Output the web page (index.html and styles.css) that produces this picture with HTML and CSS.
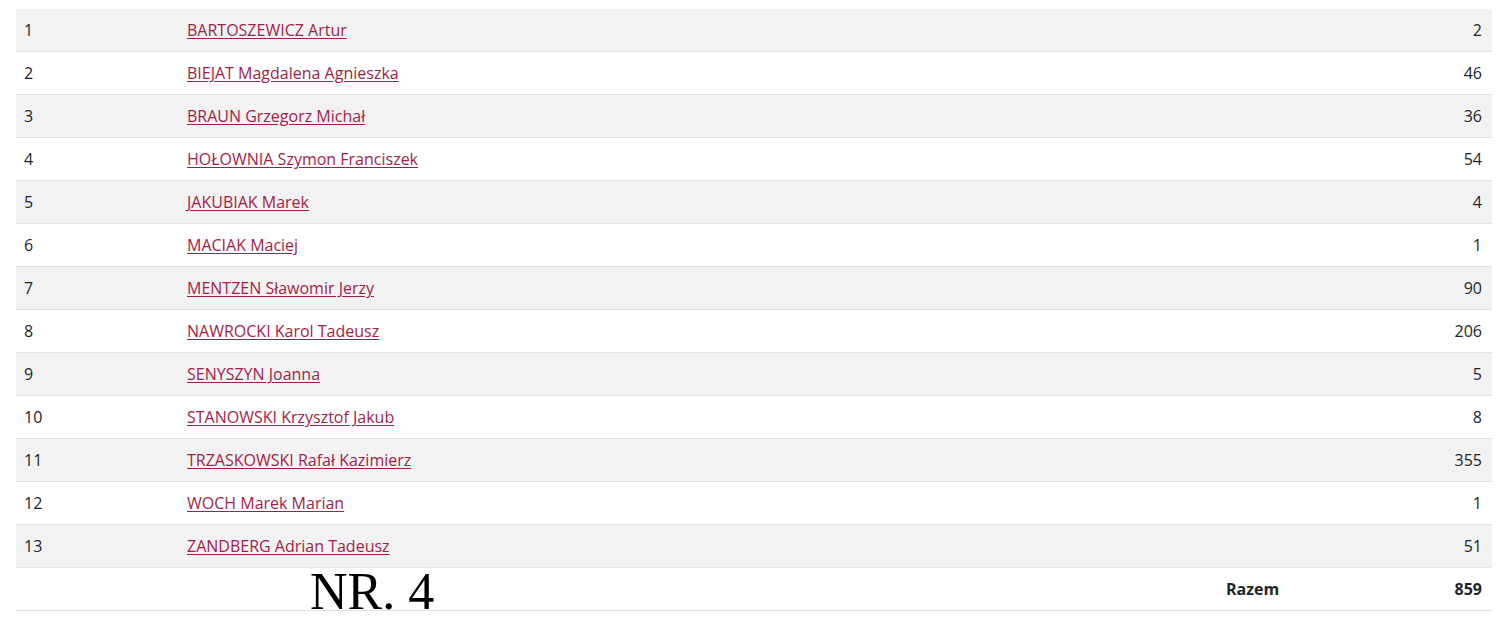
FILE: index.html
```html
<!DOCTYPE html>
<html lang="pl">
<head>
<meta charset="utf-8">
<title>Wyniki</title>
<link rel="stylesheet" href="styles.css">
</head>
<body>
<div class="wrap">
<table class="results">
<colgroup>
<col class="c-lp">
<col class="c-name">
<col class="c-label">
<col class="c-votes">
</colgroup>
<tbody>
<tr><td>1</td><td colspan="2"><a href="#">BARTOSZEWICZ Artur</a></td><td class="num">2</td></tr>
<tr><td>2</td><td colspan="2"><a href="#">BIEJAT Magdalena Agnieszka</a></td><td class="num">46</td></tr>
<tr><td>3</td><td colspan="2"><a href="#">BRAUN Grzegorz Michał</a></td><td class="num">36</td></tr>
<tr><td>4</td><td colspan="2"><a href="#">HOŁOWNIA Szymon Franciszek</a></td><td class="num">54</td></tr>
<tr><td>5</td><td colspan="2"><a href="#">JAKUBIAK Marek</a></td><td class="num">4</td></tr>
<tr><td>6</td><td colspan="2"><a href="#">MACIAK Maciej</a></td><td class="num">1</td></tr>
<tr><td>7</td><td colspan="2"><a href="#">MENTZEN Sławomir Jerzy</a></td><td class="num">90</td></tr>
<tr><td>8</td><td colspan="2"><a href="#">NAWROCKI Karol Tadeusz</a></td><td class="num">206</td></tr>
<tr><td>9</td><td colspan="2"><a href="#">SENYSZYN Joanna</a></td><td class="num">5</td></tr>
<tr><td>10</td><td colspan="2"><a href="#">STANOWSKI Krzysztof Jakub</a></td><td class="num">8</td></tr>
<tr><td>11</td><td colspan="2"><a href="#">TRZASKOWSKI Rafał Kazimierz</a></td><td class="num">355</td></tr>
<tr><td>12</td><td colspan="2"><a href="#">WOCH Marek Marian</a></td><td class="num">1</td></tr>
<tr><td>13</td><td colspan="2"><a href="#">ZANDBERG Adrian Tadeusz</a></td><td class="num">51</td></tr>
</tbody>
<tfoot>
<tr><td></td><td class="stamp-cell"><span class="stamp">NR. 4</span></td><td class="total">Razem</td><td class="num total">859</td></tr>
</tfoot>
</table>
</div>
</body>
</html>
```
FILE: styles.css
```css
html, body {
  margin: 0;
  padding: 0;
  background: #fff;
}
body {
  font-family: "Open Sans", "Liberation Sans", sans-serif;
  font-size: 16px;
  color: #212529;
}
.wrap {
  padding: 9px 8px 0 16px;
}
.results {
  width: 1476px;
  border-collapse: collapse;
  table-layout: fixed;
}
.c-lp { width: 163px; }
.c-name { width: 1039px; }
.c-label { width: 150px; }
.c-votes { width: 124px; }
.results td {
  padding: 9px 8px;
  line-height: 24px;
  height: 24px;
  border-bottom: 1px solid #dee2e6;
  vertical-align: middle;
}
.results tbody tr:nth-child(odd) td {
  background: #f2f2f2;
}
.results tbody tr:last-child td {
  border-bottom-color: #e6e6e6;
}
.results a {
  color: #a51c47;
  text-decoration: underline;
  text-underline-offset: 2px;
}
.num {
  text-align: right;
  padding-right: 10px !important;
}
.total {
  font-weight: 700;
  font-size: 16px;
}
.stamp-cell {
  position: relative;
}
.stamp {
  position: absolute;
  left: 131px;
  top: -2px;
  font-family: "Liberation Serif", "Times New Roman", serif;
  font-size: 52px;
  line-height: 52px;
  color: #000;
  white-space: nowrap;
}
```
